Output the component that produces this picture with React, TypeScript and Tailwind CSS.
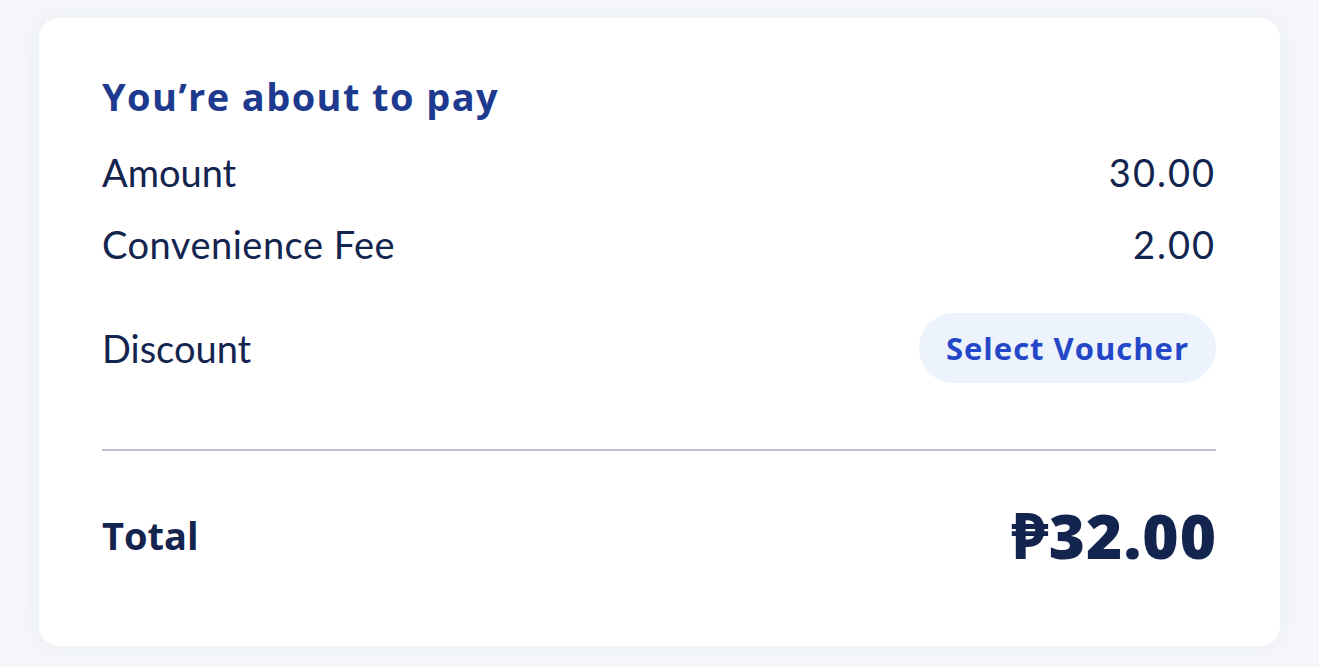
export default function App() {
  const reg = { fontFamily: "Lato, 'Open Sans', sans-serif" };
  const bold = { fontFamily: "'Open Sans', Lato, sans-serif" };
  return (
    <div className="w-[1319px] h-[667px] bg-[#f5f7fb] pt-[18px] px-[39px]" style={reg}>
      <div className="h-[628px] bg-white rounded-[20px] shadow-[0_0_24px_rgba(30,50,90,0.06)] pl-[63px] pr-[64px] pt-[51px]">
        <div className="text-[38px] font-bold text-[#1e3a8e] leading-[54px] tracking-[1.4px]" style={bold}>You’re about to pay</div>
        <div className="flex justify-between items-center h-[50px] mt-[24px] text-[38px] text-[#13244f]">
          <span>Amount</span><span className="tracking-[2px]">30.00</span>
        </div>
        <div className="flex justify-between items-center h-[50px] mt-[22px] text-[38px] text-[#13244f]">
          <span className="tracking-[0.5px]">Convenience Fee</span><span className="tracking-[2px]">2.00</span>
        </div>
        <div className="flex justify-between items-center h-[70px] mt-[44px] text-[38px] text-[#13244f]">
          <span>Discount</span>
          <span className="h-[70px] w-[297px] rounded-full bg-[#edf3fd] flex items-center justify-center text-[31px] font-bold text-[#2447c8] tracking-[1px]" style={bold}>Select Voucher</span>
        </div>
        <div className="h-[2px] bg-[#b9c1d3] mt-[66px]"></div>
        <div className="flex justify-between items-center h-[70px] mt-[49px] text-[#13244f]" style={bold}>
          <span className="text-[38px] font-bold">Total</span>
          <span className="text-[62px] font-extrabold tracking-[1px] mr-[-1px]">₱32.00</span>
        </div>
      </div>
    </div>
  );
}
